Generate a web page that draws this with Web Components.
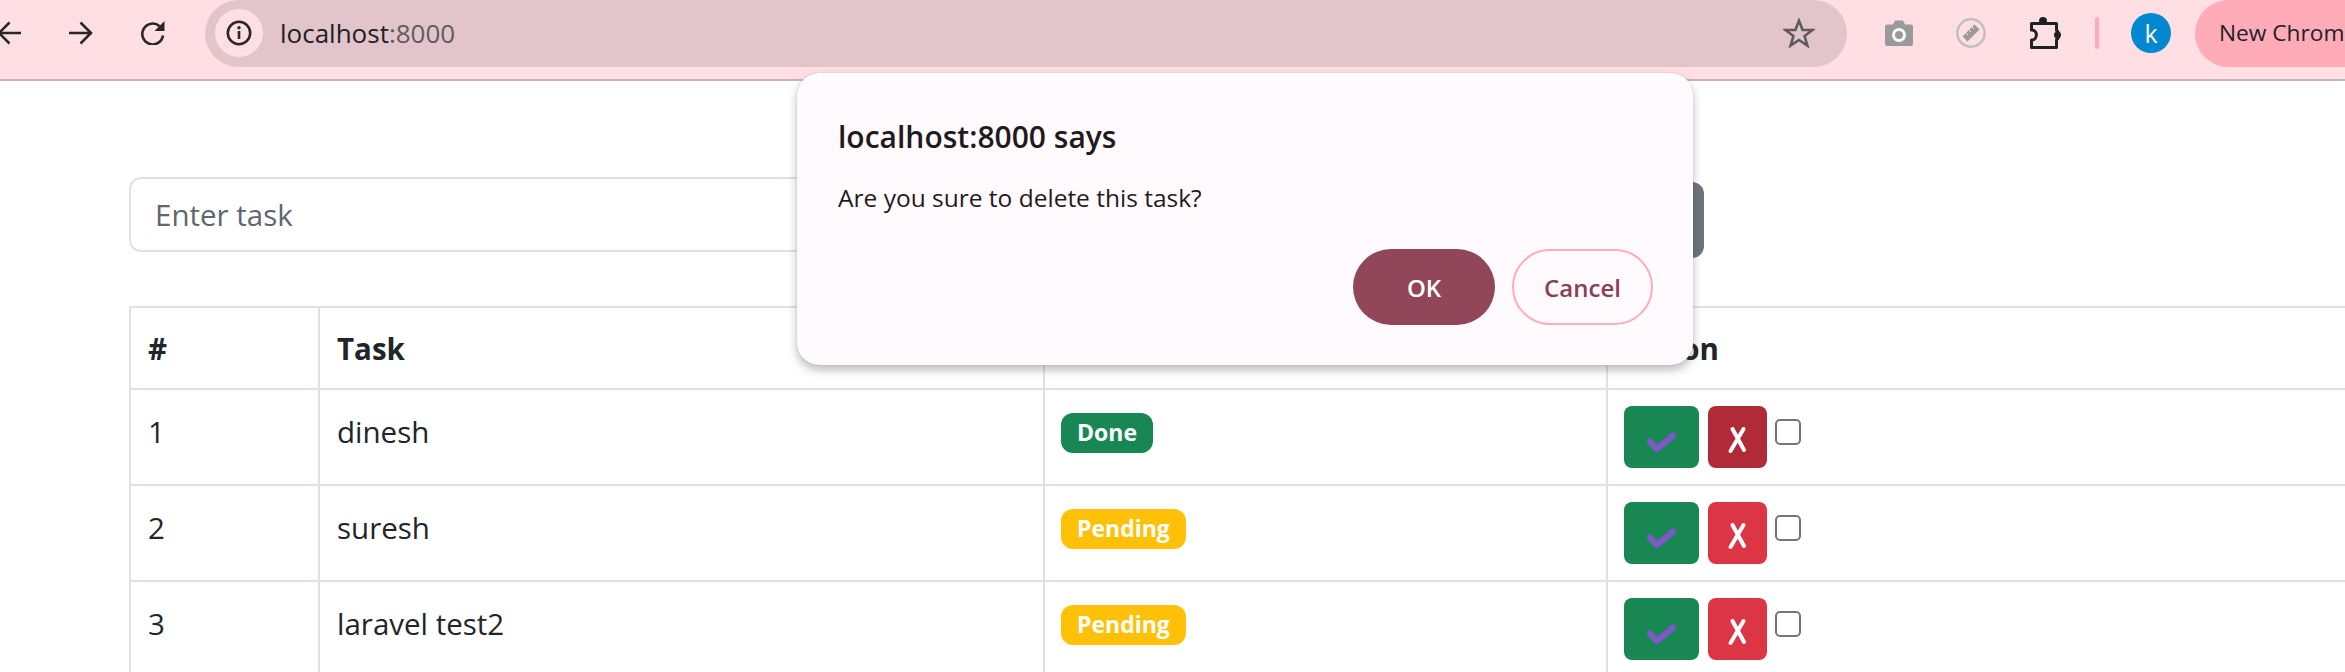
<!DOCTYPE html>
<html lang="en">
<head>
<meta charset="utf-8">
<title>Tasks</title>
<style>
  html, body { margin: 0; height: 100%; overflow: hidden; background: #fff; }
  body { font-family: "Open Sans", "Noto Sans", sans-serif; color: #212529; }
</style>
</head>
<body>
<browser-toolbar url="localhost" port=":8000"></browser-toolbar>

<task-page>
  <task-form placeholder="Enter task"></task-form>
  <task-table>
    <task-row header>
      <span slot="n">#</span><span slot="task">Task</span><span slot="status">Status</span><span slot="action">Action</span>
    </task-row>
    <task-row>
      <span slot="n">1</span><span slot="task">dinesh</span>
      <status-badge slot="status" kind="done">Done</status-badge>
      <row-actions slot="action" hover></row-actions>
    </task-row>
    <task-row>
      <span slot="n">2</span><span slot="task">suresh</span>
      <status-badge slot="status" kind="pending">Pending</status-badge>
      <row-actions slot="action"></row-actions>
    </task-row>
    <task-row>
      <span slot="n">3</span><span slot="task">laravel test2</span>
      <status-badge slot="status" kind="pending">Pending</status-badge>
      <row-actions slot="action"></row-actions>
    </task-row>
  </task-table>
</task-page>

<alert-dialog>
  <span slot="title">localhost:8000 says</span>
  Are you sure to delete this task?
</alert-dialog>

<script>
class BrowserToolbar extends HTMLElement {
  constructor() {
    super();
    this.attachShadow({ mode: 'open' });
    this.shadowRoot.innerHTML = `
      <style>
        :host {
          display: flex;
          align-items: center;
          box-sizing: content-box;
          height: 66px;
          padding-bottom: 13px;
          background: #ffdfe4;
          border-bottom: 2px solid #cbb0ba;
          overflow: hidden;
          color: #202124;
        }
        svg { display: block; flex: none; }
        .line { fill: none; stroke: #27272a; stroke-width: 2.6; }
        #back { margin-left: -3px; }
        #forward { margin-left: 48px; }
        #reload { margin-left: 48px; }
        #omni {
          flex: none;
          display: flex;
          align-items: center;
          box-sizing: border-box;
          width: 1642px;
          height: 67px;
          margin: 0 0 0 40px;
          padding: 0 10px;
          border-radius: 34px;
          background: #e2c5ca;
        }
        #info {
          display: flex;
          align-items: center;
          justify-content: center;
          width: 48px;
          height: 48px;
          border-radius: 50%;
          background: #ffdfe4;
        }
        #url { margin-left: 17px; font-size: 26px; line-height: 36px; }
        #url span { color: #5f5c60; }
        #star { margin-left: auto; margin-right: 22px; }
        #camera { margin-left: 38px; }
        #ruler { margin-left: 43px; }
        #puzzle { margin-left: 43px; }
        #divider { flex: none; width: 4px; height: 32px; margin-left: 34px; border-radius: 2px; background: #ffaab8; }
        #avatar {
          flex: none;
          display: flex;
          align-items: center;
          justify-content: center;
          width: 40px;
          height: 40px;
          margin-left: 32px;
          border-radius: 50%;
          background: #0288d1;
          color: #fff;
          font-size: 25px;
        }
        #update {
          flex: none;
          box-sizing: border-box;
          height: 67px;
          width: 150px;
          margin-left: 24px;
          padding: 0 0 0 24px;
          border-radius: 34px 0 0 34px;
          background: #ffabb8;
          font-size: 22.7px;
          line-height: 66px;
          white-space: nowrap;
        }
      </style>
      <svg id="back" width="24" height="24" viewBox="0 0 24 24" class="line"><path d="M24 12H2M12.5 1.5 2 12l10.5 10.5"/></svg>
      <svg id="forward" width="24" height="24" viewBox="0 0 24 24" class="line"><path d="M0 12h22M11.5 1.5 22 12 11.5 22.5"/></svg>
      <svg id="reload" width="24" height="24" viewBox="0 0 24 24">
        <path class="line" d="M18.6 5.2A10.4 10.4 0 1 0 22 14.5"/>
        <path d="M23.5 0v10h-10z" fill="#27272a"/>
      </svg>
      <div id="omni">
        <div id="info">
          <svg width="26" height="26" viewBox="0 0 26 26">
            <circle class="line" cx="13" cy="13" r="11.2"/>
            <rect x="11.7" y="11" width="2.6" height="8" fill="#27272a"/>
            <circle cx="13" cy="7.8" r="1.7" fill="#27272a"/>
          </svg>
        </div>
        <div id="url">${this.getAttribute('url')}<span>${this.getAttribute('port')}</span></div>
        <svg id="star" width="32" height="30" viewBox="0 0 32 30">
          <path d="M16 2.6 19.6 12H29.6L21.6 18 24.4 27.6 16 22 7.6 27.6 10.4 18 2.4 12H12.4Z" fill="none" stroke="#5f5a5d" stroke-width="2.6"/>
        </svg>
      </div>
      <svg id="camera" width="28" height="26" viewBox="0 0 28 26">
        <path d="M2 4.5H8L10 .5H18L20 4.5H26Q28 4.5 28 6.5V24Q28 26 26 26H2Q0 26 0 24V6.5Q0 4.5 2 4.5Z" fill="#9a9a9a"/>
        <circle cx="14" cy="15" r="7" fill="#fff"/>
        <circle cx="14" cy="15" r="4" fill="#9a9a9a"/>
      </svg>
      <svg id="ruler" width="30" height="30" viewBox="0 0 30 30">
        <circle cx="15" cy="15" r="13.7" fill="none" stroke="#bfbfbf" stroke-width="2.4"/>
        <path d="M6.5 18.5 18.5 6.5 23.5 11.5 11.5 23.5Z" fill="#9a9a9a"/>
        <path d="M10 15l2 2M13 12l2 2M16 9l2 2" stroke="#ffdfe4" stroke-width="1"/>
      </svg>
      <svg id="puzzle" width="32" height="32" viewBox="0 0 32 32">
        <path d="M2.5 6.5H27.5V13.5C30 13.5 30 22.5 27.5 22.5V30.5H2.5V23C9 23 9 13 2.5 13Z" fill="none" stroke="#202124" stroke-width="3" stroke-linejoin="round"/>
        <circle cx="14" cy="4" r="4" fill="#202124"/>
        <circle cx="28.5" cy="18" r="3.5" fill="#202124"/>
      </svg>
      <div id="divider"></div>
      <div id="avatar">k</div>
      <div id="update">New Chrom</div>
    `;
  }
}

class TaskPage extends HTMLElement {
  constructor() {
    super();
    this.attachShadow({ mode: 'open' });
    this.shadowRoot.innerHTML = `
      <style>
        :host { display: block; padding: 96px 0 0 129px; }
      </style>
      <slot></slot>
    `;
  }
}

class TaskForm extends HTMLElement {
  constructor() {
    super();
    this.attachShadow({ mode: 'open' });
    this.shadowRoot.innerHTML = `
      <style>
        :host { display: flex; align-items: flex-start; width: 1575px; margin-bottom: 48px; }
        input {
          flex: 1;
          box-sizing: border-box;
          height: 75px;
          padding: 0 24px;
          border: 2px solid #dee2e6;
          border-radius: 12px;
          font: 29.5px "Open Sans", sans-serif;
          color: #212529;
          outline: none;
        }
        input::placeholder { color: #5f666d; opacity: 1; }
        button {
          width: 130px;
          height: 76px;
          margin: 5px 0 0 12px;
          border: 0;
          border-radius: 12px;
          background: #6c757d;
          color: #fff;
          font: 29px "Open Sans", sans-serif;
        }
      </style>
      <input type="text" placeholder="${this.getAttribute('placeholder')}">
      <button type="button"></button>
    `;
  }
}

class TaskTable extends HTMLElement {
  constructor() {
    super();
    this.attachShadow({ mode: 'open' });
    this.shadowRoot.innerHTML = `
      <style>
        :host {
          display: block;
          width: 2216px;
          border-top: 2px solid #dee2e6;
          border-left: 2px solid #dee2e6;
        }
      </style>
      <slot></slot>
    `;
  }
}

class TaskRow extends HTMLElement {
  constructor() {
    super();
    this.attachShadow({ mode: 'open' });
    this.shadowRoot.innerHTML = `
      <style>
        :host {
          display: grid;
          grid-template-columns: 189px 725px 563px 1fr;
          height: 96px;
          box-sizing: border-box;
          border-bottom: 2px solid #dee2e6;
          font-size: 29.5px;
          line-height: 40px;
        }
        :host([header]) { height: 82px; font-weight: 700; }
        .cell {
          box-sizing: border-box;
          padding: 22px 0 0 17px;
          border-right: 2px solid #dee2e6;
        }
        .badge { padding: 23px 0 0 16px; }
        .actions { padding: 16px 0 0 16px; }
        :host([header]) .cell { padding-top: 21px; }
      </style>
      <div class="cell"><slot name="n"></slot></div>
      <div class="cell"><slot name="task"></slot></div>
      <div class="cell badge"><slot name="status"></slot></div>
      <div class="cell actions"><slot name="action"></slot></div>
    `;
  }
}

class StatusBadge extends HTMLElement {
  constructor() {
    super();
    this.attachShadow({ mode: 'open' });
    this.shadowRoot.innerHTML = `
      <style>
        :host {
          display: inline-block;
          box-sizing: border-box;
          height: 40px;
          padding: 0 16px;
          border-radius: 12px;
          color: #fff;
          font-size: 23px;
          font-weight: 700;
          line-height: 39px;
          vertical-align: top;
        }
        :host([kind="done"]) { background: #198754; }
        :host([kind="pending"]) { background: #ffc107; }
      </style>
      <slot></slot>
    `;
  }
}

class RowActions extends HTMLElement {
  constructor() {
    super();
    this.attachShadow({ mode: 'open' });
    this.shadowRoot.innerHTML = `
      <style>
        :host { display: flex; align-items: flex-start; gap: 8px; }
        button { display: block; height: 62px; padding: 0; border: 0; border-radius: 8px; }
        svg { display: block; }
        #done { width: 75px; background: #198754; margin-right: 1px; }
        #remove { width: 59px; background: #dc3545; }
        :host([hover]) #remove { background: #b02a37; }
        input {
          appearance: none;
          box-sizing: border-box;
          width: 26px;
          height: 26px;
          margin: 13px 0 0;
          border: 2.5px solid #767676;
          border-radius: 5px;
          background: #fff;
        }
      </style>
      <button id="done" type="button">
        <svg width="75" height="62" viewBox="0 0 75 62"><path d="M26 35.5 33 43 49 29.5" fill="none" stroke="#7e57c9" stroke-width="6" stroke-linecap="round" stroke-linejoin="round"/></svg>
      </button>
      <button id="remove" type="button">
        <svg width="59" height="62" viewBox="0 0 59 62"><path d="M24.5 23 36 44M35.5 23 22.5 45" fill="none" stroke="#fff" stroke-width="4" stroke-linecap="round"/></svg>
      </button>
      <input type="checkbox">
    `;
  }
}

class AlertDialog extends HTMLElement {
  constructor() {
    super();
    this.attachShadow({ mode: 'open' });
    this.shadowRoot.innerHTML = `
      <style>
        :host {
          position: absolute;
          left: 797px;
          top: 73px;
          box-sizing: border-box;
          width: 896px;
          height: 292px;
          padding: 44px 40px 40px 41px;
          border-radius: 22px;
          background: #fffafe;
          box-shadow: 0 0 1px rgba(150, 110, 125, .5), 0 5px 10px rgba(60, 64, 67, .35);
          color: #1f1a1d;
        }
        #title { font-size: 30px; font-weight: 600; line-height: 40px; }
        #body { margin-top: 25px; font-size: 24.5px; line-height: 32px; }
        #buttons { display: flex; justify-content: flex-end; gap: 17px; margin-top: 35px; }
        button {
          box-sizing: border-box;
          width: 142px;
          height: 76px;
          border-radius: 38px;
          font: 600 24px "Open Sans", sans-serif;
        }
        #ok { border: 0; background: #914659; color: #fff; }
        #cancel { width: 141px; border: 2px solid #ffabb8; background: transparent; color: #8a3f55; }
      </style>
      <div id="title"><slot name="title"></slot></div>
      <div id="body"><slot></slot></div>
      <div id="buttons">
        <button id="ok" type="button">OK</button>
        <button id="cancel" type="button">Cancel</button>
      </div>
    `;
  }
}

customElements.define('browser-toolbar', BrowserToolbar);
customElements.define('task-page', TaskPage);
customElements.define('task-form', TaskForm);
customElements.define('task-table', TaskTable);
customElements.define('task-row', TaskRow);
customElements.define('status-badge', StatusBadge);
customElements.define('row-actions', RowActions);
customElements.define('alert-dialog', AlertDialog);
</script>
</body>
</html>
